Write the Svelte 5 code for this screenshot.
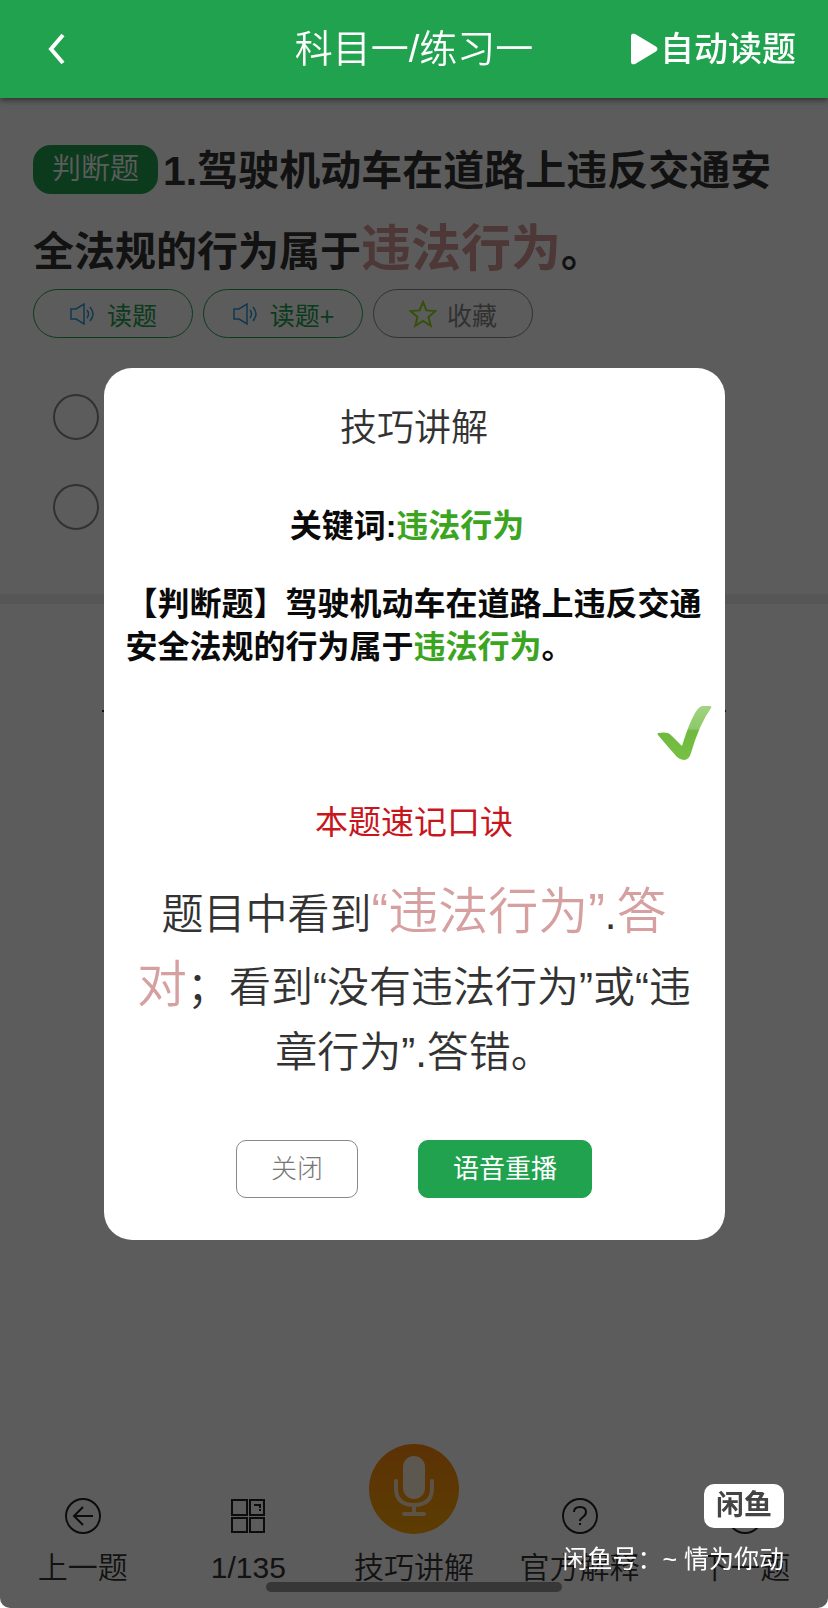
<script lang="ts">
	let show_tip = $state(true);

	const options = ['a', 'b'];
</script>

<div class="app">
	<header>
		<button class="back" aria-label="返回">
			<svg width="20" height="34" viewBox="0 0 20 34">
				<path d="M17 3 5 17 17 31" fill="none" stroke="#fff" stroke-width="4" />
			</svg>
		</button>
		<h1>科目一/练习一</h1>
		<button class="auto">
			<svg width="28" height="34" viewBox="0 0 28 34">
				<path
					d="M2 4v26q0 2 3 1l20-12q3-2 0-4L5 3q-3-1-3 1z"
					fill="#fff"
					stroke="#fff"
					stroke-width="2"
					stroke-linejoin="round"
				/>
			</svg>
			自动读题
		</button>
	</header>

	<main>
		<section class="question">
			<p class="stem">
				<span class="tag">判断题</span>1.驾驶机动车在道路上违反交通安全法规的行为属于<em>违法行为</em>。
			</p>
			<div class="tools">
				{#each ['读题', '读题+'] as label}
					<button class="pill">
						<svg width="26" height="26" viewBox="0 0 26 26" fill="none" stroke="#2c9ad8" stroke-width="1.5">
							<path d="M2 8h5l8-5v20l-8-5H2z" />
							<path d="M18 9q3 4 0 8M21 6q6 7 0 14" />
						</svg>
						{label}
					</button>
				{/each}
				<button class="pill grey">
					<svg width="28" height="28" viewBox="0 0 28 28">
						<path
							d="m14 2 3.4 8.400 9 .7-6.900 5.900 2.200 8.800L14 21 6.300 25.800l2.200-8.800-6.900-5.900 9-.7z"
							fill="none"
							stroke="#96dc1e"
							stroke-width="2"
						/>
					</svg>
					收藏
				</button>
			</div>
			<div class="options">
				{#each options as option}
					<input type="radio" name="answer" value={option} aria-label={option} />
				{/each}
			</div>
		</section>
		<div class="band"></div>
		<div class="rule"></div>
	</main>

	<nav>
		<a href="#prev">
			<svg width="36" height="36" viewBox="0 0 36 36">
				<circle cx="18" cy="18" r="17" />
				<path d="M28 18H9M18 9l-9 9 9 9" />
			</svg>
			上一题
		</a>
		<a href="#list">
			<svg width="36" height="36" viewBox="0 0 36 36">
				<path d="M2 2h15v15H2zM20 2h14v15H20zM2 20h15v14H2zM20 20h14v14H20z" />
				<path d="M24 7h6v3M29 12h2" />
			</svg>
			1/135
		</a>
		<a href="#tips">
			<svg class="mic" width="90" height="90" viewBox="0 0 90 90">
				<defs>
					<linearGradient id="orange" x1="0" y1="0" x2="0" y2="1">
						<stop offset="0" stop-color="#ff8a10" />
						<stop offset="1" stop-color="#ffa808" />
					</linearGradient>
				</defs>
				<circle class="disc" cx="45" cy="45" r="45" />
				<rect x="34" y="12" width="22" height="43" rx="11" />
				<path d="M27 37v7q0 17 18 17t18-17v-7M45 61v9M35 70h20" />
			</svg>
			技巧讲解
		</a>
		<a href="#official">
			<svg width="36" height="36" viewBox="0 0 36 36">
				<circle cx="18" cy="18" r="17" />
				<path d="M12 14q0-5 6-5t6 5q0 3-3 5t-3 4M18 25v2" />
			</svg>
			官方解释
		</a>
		<a href="#next">
			<svg width="36" height="36" viewBox="0 0 36 36">
				<circle cx="18" cy="18" r="17" />
				<path d="M8 18h19M18 9l9 9-9 9" />
			</svg>
			下一题
		</a>
	</nav>
</div>

{#if show_tip}
	<div class="overlay">
		<div class="modal" role="dialog" aria-labelledby="tip-title">
			<h2 id="tip-title">技巧讲解</h2>
			<p class="keyword">关键词:<b>违法行为</b></p>
			<p class="quote">
				【判断题】驾驶机动车在道路上违反交通<br />安全法规的行为属于<b>违法行为</b>。
			</p>
			<svg class="check" width="56" height="58" viewBox="0 0 56 58">
				<defs>
					<linearGradient id="leaf" x1="0" y1="0" x2="0" y2="1">
						<stop offset="0" stop-color="#a3d482" />
						<stop offset="0.42" stop-color="#8cc968" />
						<stop offset="0.46" stop-color="#6fb93e" />
						<stop offset="1" stop-color="#76c043" />
					</linearGradient>
				</defs>
				<path
					d="M1 29q6-1 10 0 2 1 4 3l10 10Q33 16 40 6q3-4 6-4h7q2 0 1 2-12 17-20 45-2 7-7 7-4 0-7-3Q11 43 1 31q-1-1 0-2z"
					fill="url(#leaf)"
				/>
			</svg>
			<h3>本题速记口诀</h3>
			<p class="rhyme">
				题目中看到<em>“违法行为”</em>.<em>答</em><br /><em>对</em>；看到“没有违法行为”或“违<br />章行为”.答错。
			</p>
			<div class="actions">
				<button onclick={() => (show_tip = false)}>关闭</button>
				<button class="primary">语音重播</button>
			</div>
		</div>
	</div>
{/if}

<div class="home-bar"></div>

<div class="watermark">
	<span class="logo">闲鱼</span>
	<span>闲鱼号：~ 情为你动</span>
</div>

<style>
	:global(body) {
		background: #fff;
		font-family: 'Liberation Sans', 'Noto Sans CJK SC', sans-serif;
	}

	button {
		font-family: inherit;
		background: none;
		border: 0;
		padding: 0;
		cursor: pointer;
	}

	h1,
	h2,
	h3,
	p {
		margin: 0;
		font-weight: 350;
	}

	em,
	b {
		font-style: normal;
	}

	.app {
		min-height: 100vh;
		display: flex;
		flex-direction: column;
	}

	header {
		position: sticky;
		top: 0;
		z-index: 3;
		height: 98px;
		box-sizing: border-box;
		padding: 0 32px;
		display: grid;
		grid-template-columns: 1fr auto 1fr;
		align-items: center;
		background: #20a24e;
		color: #fff;
		box-shadow: 0 2px 6px rgba(0, 0, 0, 0.5);
	}

	h1 {
		font-size: 38px;
		line-height: 56px;
	}

	.back {
		justify-self: start;
		display: flex;
		margin-left: 14px;
	}

	.auto {
		justify-self: end;
		display: flex;
		align-items: center;
		gap: 2px;
		color: #fff;
		font-size: 34px;
		font-weight: 500;
		line-height: 50px;
	}

	main {
		flex: 1;
	}

	.question {
		padding: 34px 33px 64px;
	}

	.stem {
		font-size: 41px;
		font-weight: 700;
		line-height: 78px;
		color: #333;
	}

	.stem em {
		font-size: 50px;
		color: #d69a9a;
	}

	.tag {
		display: inline-block;
		vertical-align: middle;
		margin: -10px 5px 0 0;
		padding: 0 19px;
		border-radius: 18px;
		background: #20a24e;
		color: #fff;
		font-size: 29px;
		font-weight: 350;
		line-height: 49px;
	}

	.tools {
		display: flex;
		gap: 10px;
		margin-top: -2px;
	}

	.pill {
		width: 160px;
		height: 49px;
		display: flex;
		align-items: center;
		justify-content: center;
		gap: 12px;
		border: 1px solid #20a24e;
		border-radius: 25px;
		color: #20a24e;
		font-size: 25px;
	}

	.grey {
		gap: 10px;
		border-color: #888;
		color: #888;
	}

	.options {
		display: flex;
		flex-direction: column;
		gap: 44px;
		padding: 56px 0 0 20px;
	}

	.options input {
		appearance: none;
		width: 46px;
		height: 46px;
		margin: 0;
		border: 2px solid #888;
		border-radius: 50%;
	}

	.band {
		height: 10px;
		background: #eee;
	}

	.rule {
		height: 2px;
		margin: 106px 102px 0;
		background: #333;
	}

	nav {
		display: grid;
		grid-template-columns: repeat(5, 1fr);
		align-items: end;
		padding-bottom: 20px;
	}

	nav a {
		display: flex;
		flex-direction: column;
		align-items: center;
		gap: 14px;
		color: #333;
		font-size: 30px;
		font-weight: 350;
		line-height: 40px;
		text-decoration: none;
	}

	nav svg {
		fill: none;
		stroke: #222;
		stroke-width: 2;
	}

	.mic {
		stroke: #ffe4c0;
		stroke-width: 4;
		stroke-linecap: round;
	}

	.mic .disc {
		fill: url(#orange);
		stroke: none;
	}

	.mic rect {
		fill: #fff0dc;
		stroke: none;
	}

	.overlay {
		position: fixed;
		inset: 0;
		z-index: 2;
		display: flex;
		align-items: center;
		justify-content: center;
		border-radius: 0 0 10px 10px;
		background: rgba(0, 0, 0, 0.64);
	}

	.modal {
		width: 75%;
		box-sizing: border-box;
		padding: 34px 22px 42px;
		border-radius: 28px;
		background: #fff;
		display: flex;
		flex-direction: column;
		align-items: center;
		color: #333;
	}

	h2 {
		font-size: 37px;
		line-height: 54px;
	}

	.keyword,
	.quote {
		color: #0a0a0a;
		font-size: 32px;
		font-weight: 700;
		line-height: 43px;
	}

	.keyword {
		margin-top: 49px;
		padding-right: 14px;
	}

	.keyword b,
	.quote b {
		color: #3ba51f;
		font-weight: 700;
	}

	.quote {
		align-self: stretch;
		margin-top: 35px;
		white-space: nowrap;
	}

	.check {
		align-self: flex-end;
		margin: 35px -10px 0 0;
	}

	h3 {
		margin-top: 37px;
		color: #c8161d;
		font-size: 33px;
		font-weight: 400;
		line-height: 48px;
	}

	.rhyme {
		margin-top: 29px;
		font-size: 42px;
		line-height: 61px;
		text-align: center;
		white-space: nowrap;
	}

	.rhyme em {
		color: #d6a0a0;
		font-size: 50px;
		line-height: 73px;
	}

	.actions {
		display: flex;
		gap: 60px;
		margin-top: 57px;
	}

	.actions button {
		height: 58px;
		padding: 0 34px;
		border: 1px solid #888;
		border-radius: 10px;
		color: #777;
		font-size: 26px;
		font-weight: 300;
		line-height: 52px;
	}

	.actions .primary {
		border-color: #20a24e;
		background: #20a24e;
		color: #fff;
		font-weight: 400;
	}

	.home-bar {
		position: fixed;
		bottom: 16px;
		left: 50%;
		z-index: 4;
		width: 296px;
		height: 10px;
		margin-left: -148px;
		border-radius: 5px;
		background: #373737;
	}

	.watermark {
		position: fixed;
		right: 44px;
		bottom: 30px;
		z-index: 5;
		display: flex;
		flex-direction: column;
		align-items: flex-end;
		gap: 12px;
		color: #fff;
		font-size: 25px;
		line-height: 38px;
	}

	.logo {
		padding: 0 12px;
		border-radius: 10px;
		background: #fff;
		color: #444;
		font-size: 28px;
		font-weight: 700;
		line-height: 44px;
	}
</style>
